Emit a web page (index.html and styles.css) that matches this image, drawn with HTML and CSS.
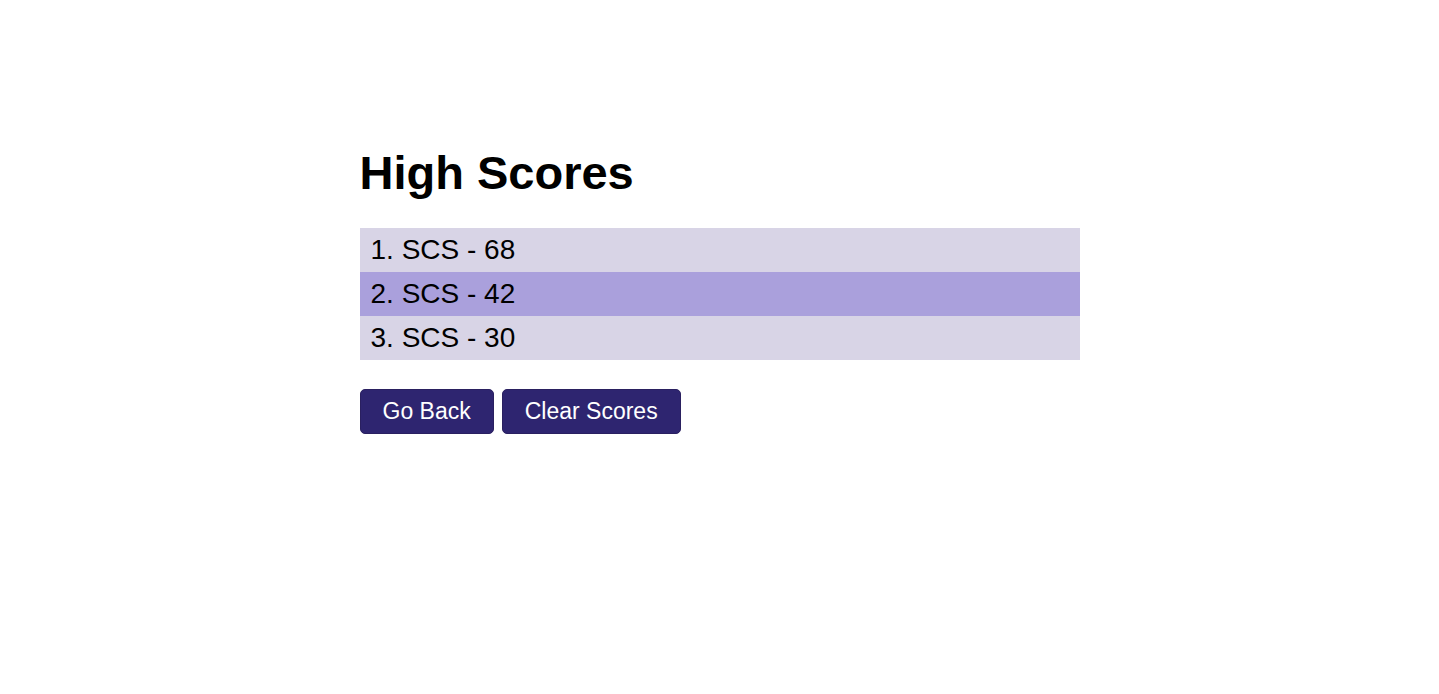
FILE: index.html
```html
<!DOCTYPE html>
<html>
<head>
<meta charset="utf-8">
<link rel="stylesheet" href="styles.css">
</head>
<body>
<main class="wrap">
  <h1 class="title">High Scores</h1>
  <ol class="scores">
    <li class="row">1. SCS - 68</li>
    <li class="row alt">2. SCS - 42</li>
    <li class="row">3. SCS - 30</li>
  </ol>
  <div class="actions">
    <button class="btn">Go Back</button>
    <button class="btn">Clear Scores</button>
  </div>
</main>
</body>
</html>
```
FILE: styles.css
```css
html, body { margin: 0; padding: 0; background: #fff; }
body { font-family: "Liberation Sans", Arial, sans-serif; color: #000; }
.wrap { width: 720px; margin: 0 auto; padding-top: 141px; }
.title { font-size: 47px; font-weight: bold; margin: 0 0 23px; line-height: 64px; }
.scores { list-style: none; margin: 0; padding: 0; }
.row { height: 44px; line-height: 44px; font-size: 28px; padding-left: 11px; background: #d8d4e6; box-sizing: border-box; }
.row.alt { background: #aaa0dc; }
.actions { display: flex; gap: 8px; margin-top: 29px; }
.btn { font-family: "Liberation Sans", Arial, sans-serif; font-size: 23px; color: #fff; background: #2e2570; border: 1px solid #2a2060; border-radius: 5px; height: 45px; padding: 0 22px; cursor: pointer; }
```
